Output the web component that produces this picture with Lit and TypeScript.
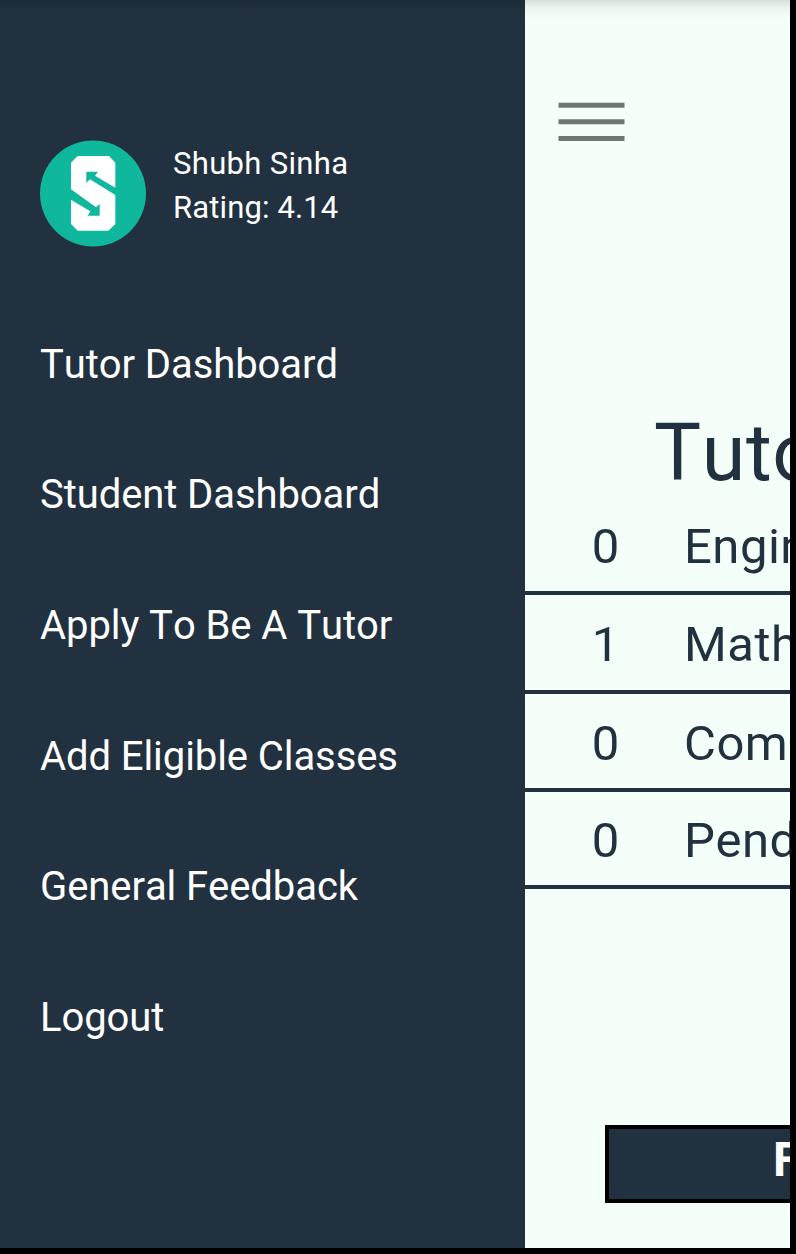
import { LitElement, html, css } from "lit";
import { customElement, property } from "lit/decorators.js";

const MENU = [
  "Tutor Dashboard",
  "Student Dashboard",
  "Apply To Be A Tutor",
  "Add Eligible Classes",
  "General Feedback",
  "Logout",
];

const STATS = [
  { count: 0, label: "Engineering" },
  { count: 1, label: "Math" },
  { count: 0, label: "Computer" },
  { count: 0, label: "Pending" },
];

@customElement("side-menu")
class SideMenu extends LitElement {
  static styles = css`
    :host {
      display: block;
      box-sizing: border-box;
      width: 525px;
      flex: none;
      padding: 140px 0 0 40px;
      background: #22313f;
      color: #fff;
    }
    .profile {
      display: flex;
      gap: 27px;
      height: 107px;
    }
    .logo {
      width: 106px;
      height: 107px;
      flex: none;
    }
    .who {
      padding-top: 2px;
      font-size: 31px;
      line-height: 44px;
      white-space: nowrap;
    }
    .name {
      letter-spacing: 0.33px;
    }
    .rating {
      letter-spacing: 0.13px;
    }
    .menu {
      list-style: none;
      margin: 0;
      padding: 52.6px 0 0;
    }
    .item {
      height: 130.7px;
      line-height: 130.7px;
      font-size: 40px;
      letter-spacing: -0.08px;
      white-space: nowrap;
    }
  `;
  render() {
    return html`
      <div class="profile">
        <svg class="logo" viewBox="30 30 318 321">
          <circle cx="189" cy="190.5" r="159" fill="#0fb79c" />
          <path
            fill="#fff"
            d="M143 78H237L256 98V173L195 137L204 125H169V158L180 148L256 195V282L235 302H143L123 282V209L181 244L173 257H209V222L198 232L123 178V98Z"
          />
        </svg>
        <div class="who">
          <div class="name">Shubh Sinha</div>
          <div class="rating">Rating: 4.14</div>
        </div>
      </div>
      <ul class="menu">
        ${MENU.map((m) => html`<li class="item">${m}</li>`)}
      </ul>
    `;
  }
}

@customElement("stat-row")
class StatRow extends LitElement {
  @property({ type: Number }) count = 0;
  @property() label = "";
  static styles = css`
    :host {
      display: grid;
      grid-template-columns: 159px 1fr;
      box-sizing: border-box;
      height: 98px;
      border-bottom: 4px solid #22313f;
      padding-top: 4px;
      line-height: 92px;
      font-size: 49px;
      white-space: nowrap;
    }
    .count {
      text-align: center;
      padding-left: 2px;
    }
    .label {
      letter-spacing: 0.5px;
    }
  `;
  render() {
    return html`<span class="count">${this.count}</span><span class="label">${this.label}</span>`;
  }
}

@customElement("app-root")
class AppRoot extends LitElement {
  static styles = css`
    :host {
      display: flex;
      box-sizing: border-box;
      width: 796px;
      height: 1254px;
      overflow: hidden;
      border: solid #000;
      border-width: 0 6px 6px 0;
      background: #f5fff9;
      color: #22313f;
      font-family: Roboto, sans-serif;
      font-kerning: none;
      position: relative;
    }
    .shade {
      position: absolute;
      inset: 0 0 auto 0;
      height: 20px;
      background: linear-gradient(rgba(0, 0, 0, 0.12), rgba(0, 0, 0, 0.03) 45%, transparent);
    }
    .page {
      flex: 1;
      min-width: 0;
      overflow: hidden;
      display: flex;
      flex-direction: column;
    }
    .burger {
      width: 67px;
      height: 39px;
      flex: none;
      margin: 102px 0 0 33px;
    }
    .title {
      margin: 265px 0 0 129px;
      font-size: 79px;
      line-height: 94px;
      font-weight: 400;
      letter-spacing: 0.6px;
      white-space: nowrap;
    }
    .stats {
      margin-top: -3px;
    }
    .stats stat-row:nth-child(2) {
      height: 99px;
    }
    .stats stat-row:nth-child(4) {
      height: 97px;
      padding-top: 3px;
    }
    .action {
      box-sizing: border-box;
      width: 420px;
      height: 78px;
      margin: 236px 0 0 80px;
      padding: 0 0 0 164px;
      border: 4px solid #000;
      background: #22313f;
      color: #fff;
      font: bold 48px/62px Roboto, sans-serif;
      text-align: left;
    }
  `;
  render() {
    return html`
      <side-menu></side-menu>
      <main class="page">
        <svg class="burger" viewBox="0 0 67 39">
          <path d="M0.5 3.2H66.5M0.5 19.8H66.5M0.5 36.4H66.5" stroke="#6d7873" stroke-width="5" />
        </svg>
        <h1 class="title">Tutor</h1>
        <div class="stats">
          ${STATS.map((s) => html`<stat-row .count=${s.count} .label=${s.label}></stat-row>`)}
        </div>
        <div class="action">F</div>
      </main>
      <div class="shade"></div>
    `;
  }
}
